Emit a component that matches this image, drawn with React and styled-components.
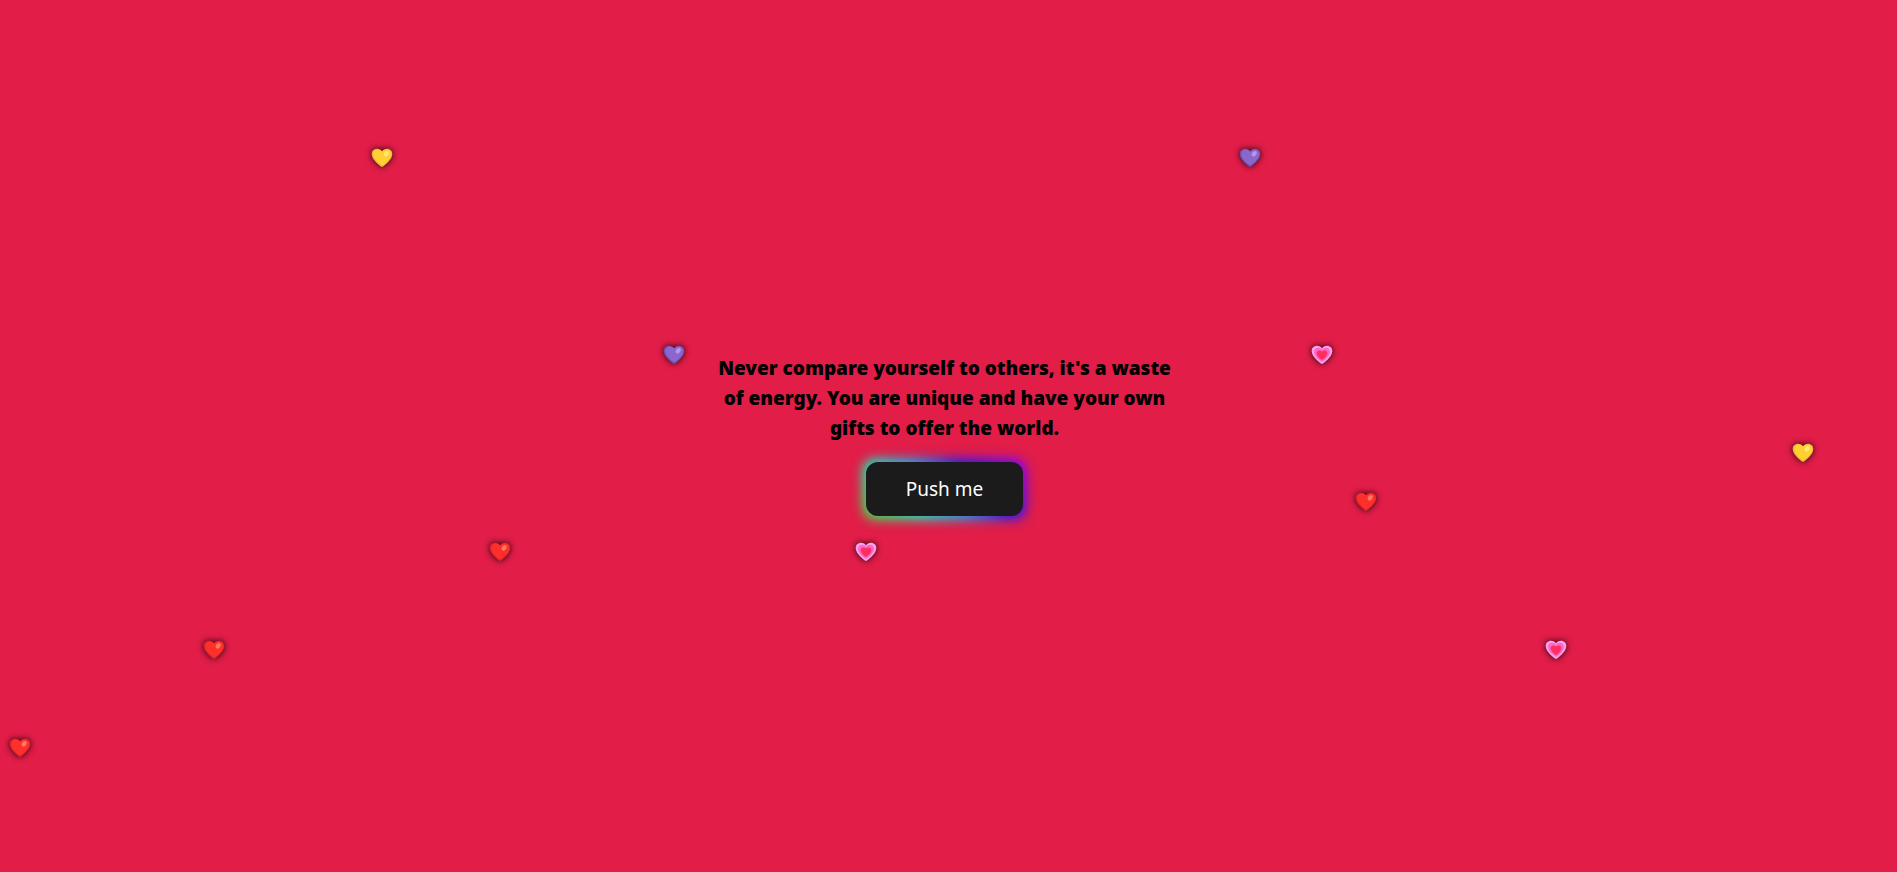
import React from "react";
import styled, { createGlobalStyle } from "styled-components";

const GlobalStyle = createGlobalStyle`
  *, *::before { box-sizing: border-box; }
  body { margin: 0; background: #e11d48; }
`;

const Page = styled.main`
  position: relative;
  display: flex;
  flex-direction: column;
  align-items: center;
  justify-content: center;
  gap: 19px;
  min-height: 100vh;
  padding: 0 8px 4px 0;
  overflow: hidden;
  font-family: "Noto Sans", "Open Sans", sans-serif;
`;

const Quote = styled.p`
  max-width: 464px;
  margin: 0;
  color: #000;
  font-size: 19px;
  font-weight: 900;
  line-height: 30px;
  text-align: center;
`;

const GlowButton = styled.button`
  position: relative;
  z-index: 0;
  height: 54px;
  padding: 0 40px;
  border: 0;
  border-radius: 12px;
  background: #1b1b1b;
  color: #fff;
  font-family: inherit;
  font-size: 19px;
  line-height: 30px;
  cursor: pointer;

  &::before {
    content: "";
    position: absolute;
    inset: -3px;
    z-index: -2;
    border-radius: 12px;
    background: linear-gradient(45deg, #38f030, #00ffc8 28%, #00b0ff 48%, #1018ff 68%, #7a00ff 94%);
    filter: blur(6px);
  }

  &::after {
    content: "";
    position: absolute;
    inset: 0;
    z-index: -1;
    border-radius: 12px;
    background: #1b1b1b;
  }
`;

const HeartMark = styled.svg`
  position: absolute;
  left: ${(p) => p.$left}%;
  top: ${(p) => p.$top}%;
  width: 22px;
  height: 20px;
  transform: translate(-50%, -50%);
  overflow: visible;
  pointer-events: none;
  filter: drop-shadow(0 0 3px rgba(0, 0, 0, 0.9));
`;

const palette = {
  yellow: { edge: "#f0b43c", fill: "#ffd02f", shine: "#ffe57a" },
  purple: { edge: "#6b4fae", fill: "#8b66cc", shine: "#b995e6" },
  red: { edge: "#dd2530", fill: "#ff3029", shine: "#ff7a62" },
};

const hearts = [
  { color: "yellow", left: 20.14, top: 18.1 },
  { color: "purple", left: 65.89, top: 18.1 },
  { color: "purple", left: 35.53, top: 40.75 },
  { color: "pink", left: 69.69, top: 40.75 },
  { color: "yellow", left: 95.04, top: 52 },
  { color: "red", left: 72.01, top: 57.6 },
  { color: "red", left: 26.36, top: 63.25 },
  { color: "pink", left: 45.63, top: 63.25 },
  { color: "red", left: 11.28, top: 74.5 },
  { color: "pink", left: 82.02, top: 74.5 },
  { color: "red", left: 1.06, top: 85.8 },
];

const HEART =
  "M11 19C9 18 1 12 .7 6.5C.5 3 3 .8 6 .8C8.3 .8 10 1.8 11 3.5C12 1.8 13.7 .8 16 .8C19 .8 21.5 3 21.3 6.5C21 12 13 18 11 19Z";

function Heart({ color, left, top }) {
  const tone = palette[color];
  return (
    <HeartMark $left={left} $top={top} viewBox="0 0 22 20" aria-hidden="true">
      {tone ? (
        <>
          <path d={HEART} fill={tone.edge} />
          <path d={HEART} fill={tone.fill} transform="translate(1.6 .8) scale(.88)" />
          <ellipse cx="15.2" cy="5.8" rx="2.2" ry="3" fill={tone.shine} transform="rotate(35 15.2 5.8)" />
        </>
      ) : (
        <>
          <path d={HEART} fill="#ffa0f4" />
          <path d={HEART} fill="#ff68c0" transform="translate(2.4 2.2) scale(.78)" />
          <path d={HEART} fill="#ff2f62" transform="translate(5.3 5) scale(.52)" />
        </>
      )}
    </HeartMark>
  );
}

export default function App() {
  return (
    <>
      <GlobalStyle />
      <Page>
        {hearts.map((heart) => (
          <Heart key={`${heart.left}-${heart.top}`} {...heart} />
        ))}
        <Quote>
          Never compare yourself to others, it's a waste of energy. You are unique and have your own gifts to offer the world.
        </Quote>
        <GlowButton type="button">Push me</GlowButton>
      </Page>
    </>
  );
}
